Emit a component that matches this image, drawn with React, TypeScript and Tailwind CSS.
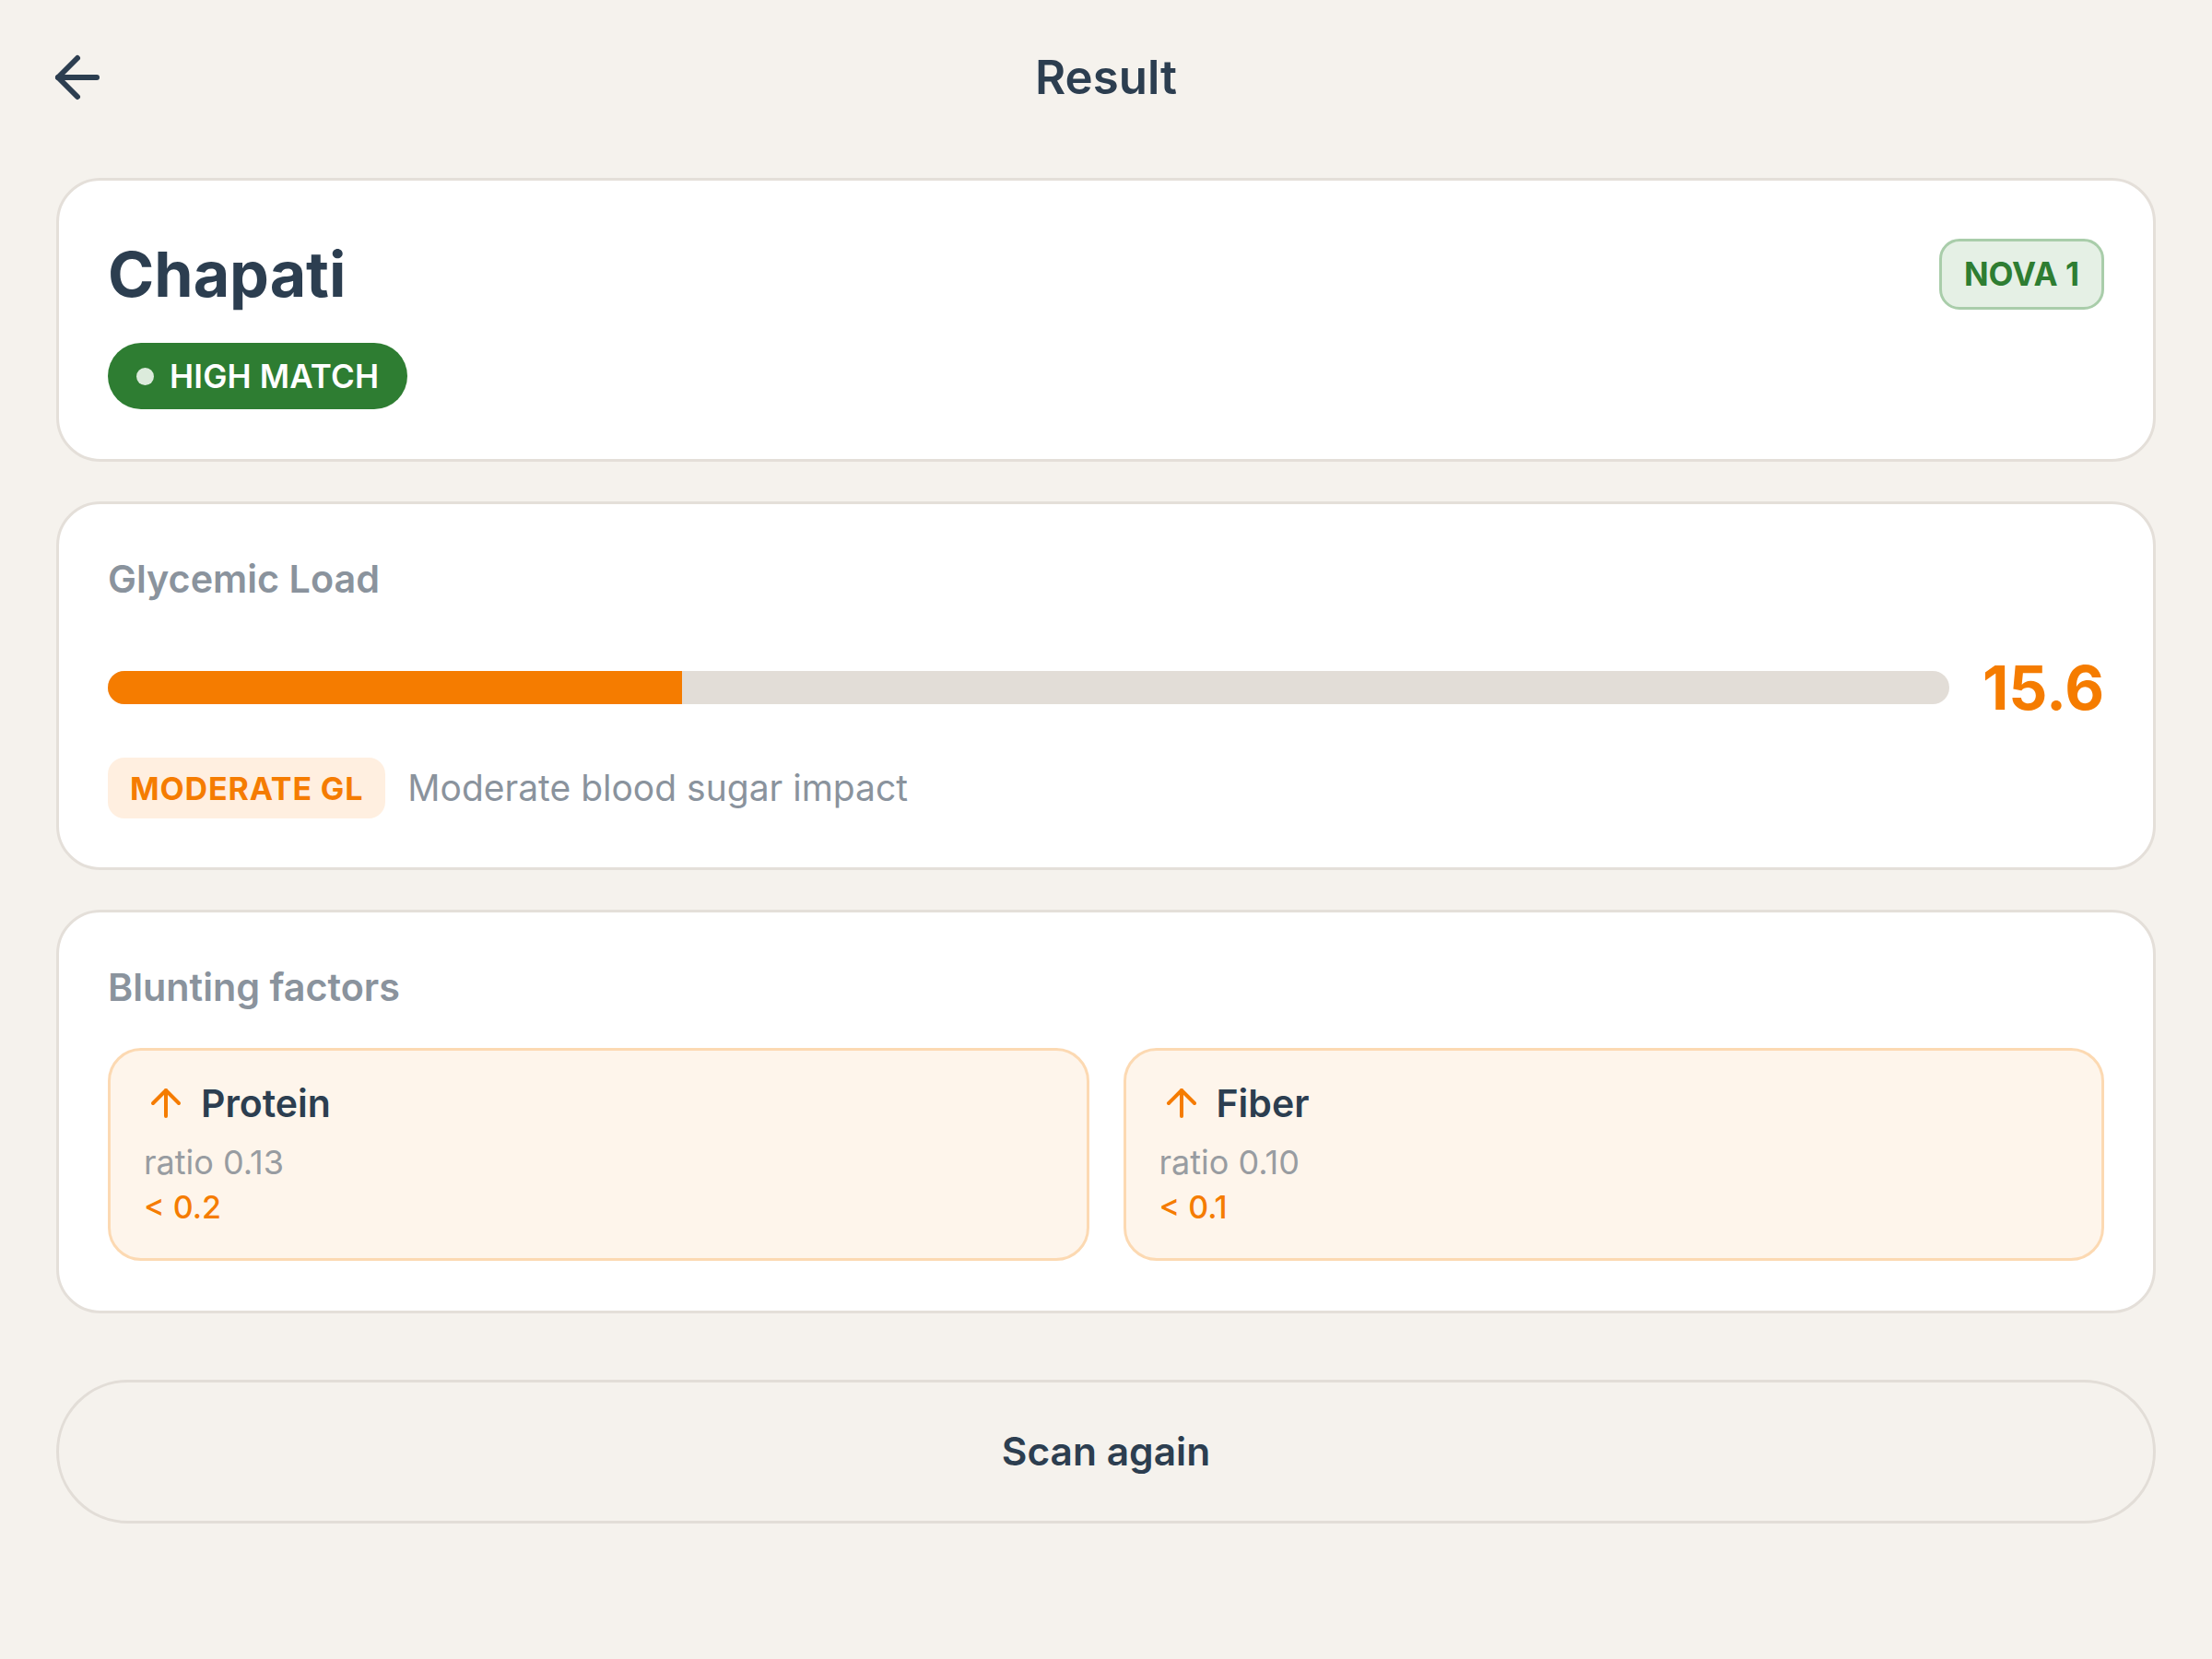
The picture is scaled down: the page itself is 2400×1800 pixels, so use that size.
import React from "react";

const FONT = { fontFamily: "Inter, 'Noto Sans', 'Liberation Sans', sans-serif" };

function ArrowLeft() {
  return (
    <svg width="72" height="72" viewBox="0 0 24 24" fill="none" stroke="#2c3e50" strokeWidth="2" strokeLinecap="round" strokeLinejoin="round">
      <path d="m12 19-7-7 7-7" />
      <path d="M19 12H5" />
    </svg>
  );
}

function ArrowUp() {
  return (
    <svg width="48" height="48" viewBox="0 0 24 24" fill="none" stroke="#f57c00" strokeWidth="2" strokeLinecap="round" strokeLinejoin="round">
      <path d="m5 12 7-7 7 7" />
      <path d="M12 19V5" />
    </svg>
  );
}

function Factor({ name, ratio, threshold }: { name: string; ratio: string; threshold: string }) {
  return (
    <div className="flex-1 rounded-[36px] border-[3px] border-[#fcd9b2] bg-[#fef5eb] pl-[36px] pr-[34px] pt-[33px] pb-[35px]">
      <div className="flex h-[48px] items-center gap-[14px]">
        <ArrowUp />
        <span className="text-[41px] font-semibold leading-[48px] text-[#2c3e50]">{name}</span>
      </div>
      <div className="mt-[20px] text-[36px] leading-[40px] text-[#989ca1]">{ratio}</div>
      <div className="mt-[9px] text-[34px] font-medium leading-[40px] text-[#f57c00]">{threshold}</div>
    </div>
  );
}

export default function App() {
  const gl = 15.6;
  const pct = (gl / 50) * 100;
  return (
    <div className="min-h-[1800px] w-full bg-[#f5f2ed]" style={FONT}>
      <header className="flex h-[168px] items-center px-[48px]">
        <button className="flex h-[72px] w-[72px] items-center justify-center">
          <ArrowLeft />
        </button>
        <h1 className="flex-1 text-center text-[51px] font-semibold text-[#2c3e50]">Result</h1>
        <div className="h-[72px] w-[72px]" />
      </header>

      <main className="flex flex-col px-[61px] pt-[25px]">
        <section className="rounded-[48px] border-[3px] border-[#e4dfd9] bg-white px-[53px] pt-[60px] pb-[54px]">
          <div className="flex items-center justify-between">
            <h2 className="text-[68px] font-bold leading-[82px] text-[#2c3e50]">Chapati</h2>
            <div className="flex h-[77px] items-center rounded-[22px] border-[3px] border-[#a9cdaa] bg-[#e5f0e5] px-[24px] text-[35px] font-bold text-[#2e7d32]">
              NOVA 1
            </div>
          </div>
          <div className="mt-[34px] inline-flex h-[72px] items-center gap-[17px] rounded-full bg-[#2e7d32] pl-[31px] pr-[31px]">
            <span className="h-[19px] w-[19px] rounded-full bg-[#dcebdc]" />
            <span className="text-[35px] font-semibold tracking-[0.005em] text-white">HIGH MATCH</span>
          </div>
        </section>

        <section className="mt-[43px] rounded-[48px] border-[3px] border-[#e4dfd9] bg-white px-[53px] pt-[57px] pb-[53px]">
          <div className="text-[41.3px] font-semibold leading-[48px] text-[#8a939d]">Glycemic Load</div>
          <div className="mt-[54px] flex h-[80px] items-center gap-[36px]">
            <div className="h-[36px] flex-1 overflow-hidden rounded-full bg-[#e2ddd7]">
              <div className="h-full bg-[#f57c00]" style={{ width: `${pct}%` }} />
            </div>
            <span className="text-[66px] font-bold leading-[80px] text-[#f57c00]">15.6</span>
          </div>
          <div className="mt-[36px] flex items-center gap-[24px]">
            <span className="flex h-[66px] items-center rounded-[18px] bg-[#ffefe0] px-[24px] text-[34px] font-bold tracking-[0.025em] text-[#f57c00]">
              MODERATE GL
            </span>
            <span className="text-[39px] text-[#8a939d]">Moderate blood sugar impact</span>
          </div>
        </section>

        <section className="mt-[43px] rounded-[48px] border-[3px] border-[#e4dfd9] bg-white px-[53px] pt-[57px] pb-[54px]">
          <div className="text-[41.3px] font-semibold leading-[48px] text-[#8a939d]">Blunting factors</div>
          <div className="mt-[42px] flex gap-[37px]">
            <Factor name="Protein" ratio="ratio 0.13" threshold="< 0.2" />
            <Factor name="Fiber" ratio="ratio 0.10" threshold="< 0.1" />
          </div>
        </section>

        <button className="mt-[72px] flex h-[156px] items-center justify-center rounded-full border-[3px] border-[#e2ddd7] bg-[#f5f2ed] text-[42.5px] font-semibold text-[#2c3e50]">
          Scan again
        </button>
      </main>
    </div>
  );
}
